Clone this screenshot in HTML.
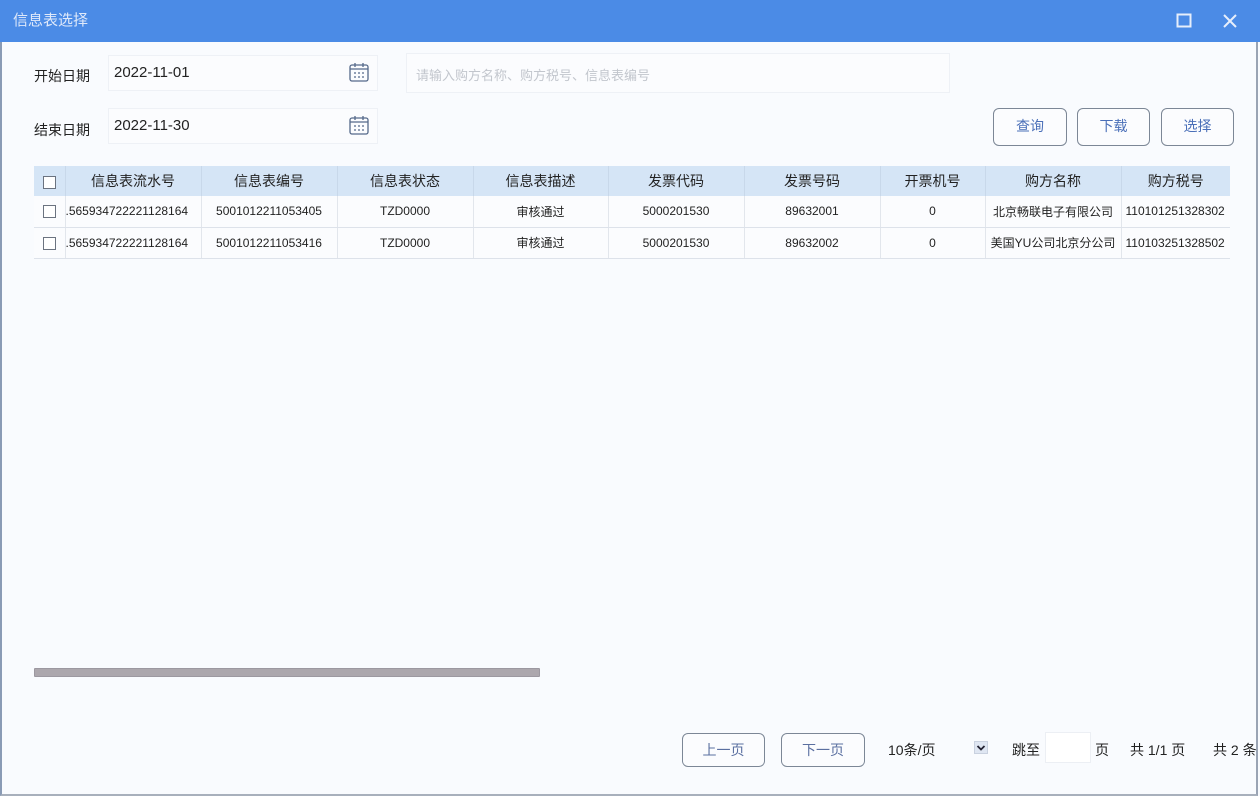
<!DOCTYPE html>
<html><head><meta charset="utf-8"><style>
*{margin:0;padding:0;box-sizing:border-box}
body{width:1260px;height:796px;overflow:hidden;background:#f9fbfe;font-family:"Liberation Sans","Noto Sans CJK SC",sans-serif;color:#222;position:relative}
.abs{position:absolute}
.title{left:0;top:0;width:1260px;height:42px;background:#4b8be6;color:#dfe9fa;font-size:15px;line-height:42px;padding-left:13px}
.frame{left:0;top:42px;width:1258px;height:754px;border-left:2px solid #8a9bb5;border-right:2px solid #9aa4b4;border-bottom:2px solid #a8b0bc}
.lbl{font-size:14px;color:#222}
.inp{background:#fbfcfe;border:1px solid #eef1f6;height:36px}
.btn{border:1px solid #7c8796;border-radius:6px;background:#fbfcfe;color:#4a6fb8;font-size:14px;text-align:center;line-height:34px;height:38px}
table{border-collapse:collapse;position:absolute;left:34px;top:166px;table-layout:fixed;width:1196px}
td,th{font-size:12px;text-align:center;overflow:hidden;white-space:nowrap;border-right:1px solid #e2e6ec;height:31px;font-weight:normal}
th{background:#d5e5f6;font-size:14px;height:30px;border-right:1px solid #c8d8ea}
tr.r td{border-bottom:1px solid #dde2ea;background:#fbfcfe}
.cb{display:inline-block;width:13px;height:13px;border:1px solid #6b7380;background:#fff;vertical-align:middle}
.cal{width:22px;height:20px}
</style></head><body>
<div class="abs title">信息表选择</div>
<svg class="abs" style="left:1176px;top:13px" width="16" height="16"><rect x="1.5" y="1.5" width="13" height="12" fill="none" stroke="#e6eefb" stroke-width="2"/></svg>
<svg class="abs" style="left:1222px;top:13px" width="16" height="16"><path d="M2 2L14 14M14 2L2 14" stroke="#e6eefb" stroke-width="2"/></svg>
<div class="abs frame"></div>

<div class="abs lbl" style="left:34px;top:66px">开始日期</div>
<div class="abs inp" style="left:108px;top:55px;width:270px"></div>
<div class="abs" style="left:114px;top:64px;font-size:15px">2022-11-01</div>
<svg class="abs cal" style="left:348px;top:62px" viewBox="0 0 22 20"><rect x="2" y="3" width="18" height="16" rx="2" fill="none" stroke="#55698a" stroke-width="1.3"/><path d="M2 7H20M7 1V5M15 1V5" stroke="#55698a" stroke-width="1.3"/><path d="M6 11h2M10 11h2M14 11h2M6 15h2M10 15h2M14 15h2" stroke="#55698a" stroke-width="1.3"/></svg>

<div class="abs lbl" style="left:34px;top:120px">结束日期</div>
<div class="abs inp" style="left:108px;top:108px;width:270px"></div>
<div class="abs" style="left:114px;top:117px;font-size:15px">2022-11-30</div>
<svg class="abs cal" style="left:348px;top:115px" viewBox="0 0 22 20"><rect x="2" y="3" width="18" height="16" rx="2" fill="none" stroke="#55698a" stroke-width="1.3"/><path d="M2 7H20M7 1V5M15 1V5" stroke="#55698a" stroke-width="1.3"/><path d="M6 11h2M10 11h2M14 11h2M6 15h2M10 15h2M14 15h2" stroke="#55698a" stroke-width="1.3"/></svg>

<div class="abs inp" style="left:406px;top:53px;width:544px;height:40px"></div>
<div class="abs" style="left:416px;top:65px;font-size:13px;color:#c2c6cd">请输入购方名称、购方税号、信息表编号</div>

<div class="abs btn" style="left:993px;top:108px;width:74px">查询</div>
<div class="abs btn" style="left:1077px;top:108px;width:73px">下载</div>
<div class="abs btn" style="left:1161px;top:108px;width:73px">选择</div>

<table>
<colgroup><col style="width:31px"><col style="width:136px"><col style="width:136px"><col style="width:136px"><col style="width:135px"><col style="width:136px"><col style="width:136px"><col style="width:105px"><col style="width:136px"><col style="width:109px"></colgroup>
<tr><th><span class="cb"></span></th><th>信息表流水号</th><th>信息表编号</th><th>信息表状态</th><th>信息表描述</th><th>发票代码</th><th>发票号码</th><th>开票机号</th><th>购方名称</th><th style="border-right:none">购方税号</th></tr>
<tr class="r"><td><span class="cb"></span></td><td style="text-align:left">.565934722221128164</td><td>5001012211053405</td><td>TZD0000</td><td>审核通过</td><td>5000201530</td><td>89632001</td><td>0</td><td>北京畅联电子有限公司</td><td style="text-align:left;padding-left:4px;border-right:none">110101251328302</td></tr>
<tr class="r"><td><span class="cb"></span></td><td style="text-align:left">.565934722221128164</td><td>5001012211053416</td><td>TZD0000</td><td>审核通过</td><td>5000201530</td><td>89632002</td><td>0</td><td>美国YU公司北京分公司</td><td style="text-align:left;padding-left:4px;border-right:none">110103251328502</td></tr>
</table>

<div class="abs" style="left:34px;top:668px;width:506px;height:9px;background:#aca7ad;border:1px solid #9c98a0;border-radius:1px"></div>

<div class="abs btn" style="left:682px;top:733px;width:83px;height:34px;line-height:32px;color:#5a6fa0">上一页</div>
<div class="abs btn" style="left:781px;top:733px;width:84px;height:34px;line-height:32px;color:#5a6fa0">下一页</div>
<div class="abs" style="left:888px;top:740px;font-size:14px">10条/页</div>
<div class="abs" style="left:974px;top:741px;width:14px;height:13px;background:#dfe6f2;border:1px solid #c9d1df"></div>
<svg class="abs" style="left:976px;top:744px" width="10" height="8"><path d="M1.5 2L5 5.5 8.5 2" fill="none" stroke="#223" stroke-width="1.8"/></svg>
<div class="abs" style="left:1012px;top:740px;font-size:14px">跳至</div>
<div class="abs" style="left:1045px;top:732px;width:46px;height:31px;background:#fff;border:1px solid #eceff4"></div>
<div class="abs" style="left:1095px;top:740px;font-size:14px">页</div>
<div class="abs" style="left:1130px;top:740px;font-size:14px">共 1/1 页</div>
<div class="abs" style="left:1213px;top:740px;font-size:14px;white-space:nowrap">共 2 条</div>
</body></html>
